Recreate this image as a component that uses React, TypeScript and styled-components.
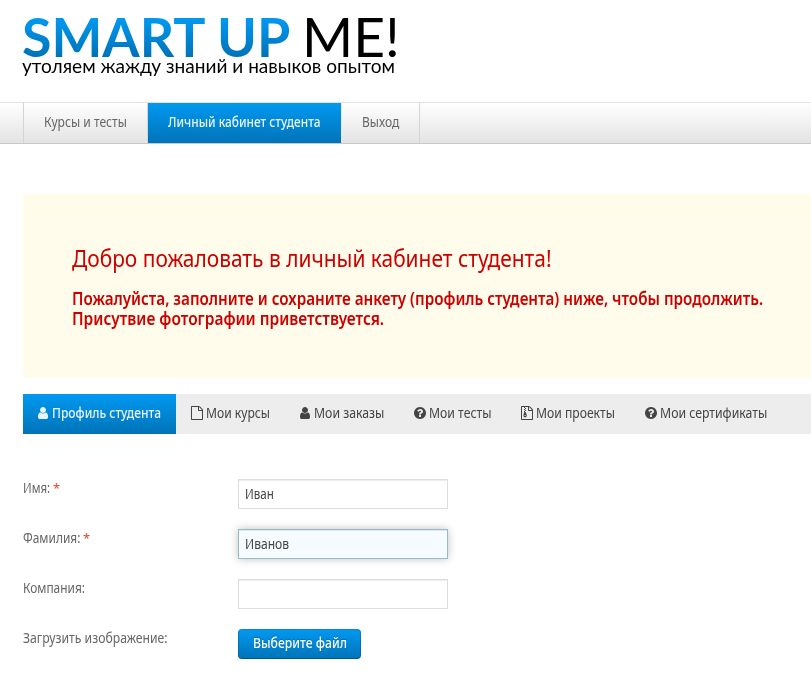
import React, { useLayoutEffect, useRef, useState } from "react";
import styled, { createGlobalStyle, css } from "styled-components";

const Global = createGlobalStyle`
  *, *::before, *::after { box-sizing: border-box; }
  html, body { margin: 0; background: #fff; }
  body {
    font-family: "Noto Sans", "Open Sans", sans-serif;
    font-size: 14px;
    line-height: 20px;
    color: #666;
    overflow: hidden;
  }
`;

const blue = "linear-gradient(#0199f1, #0073b8)";

const FitBox = styled.span<{ $w: number }>`
  display: inline-block;
  width: ${(p) => p.$w}px;
  white-space: nowrap;
  flex: none;
`;
const FitText = styled.span`
  display: inline-block;
  transform-origin: 0 50%;
`;

/* Condenses a run of text to the given width. */
function Fit({ width, children }: { width: number; children: React.ReactNode }) {
  const ref = useRef<HTMLSpanElement>(null);
  const [scale, setScale] = useState(1);
  useLayoutEffect(() => {
    if (ref.current) setScale(width / ref.current.offsetWidth);
  }, [width]);
  return (
    <FitBox $w={width}>
      <FitText ref={ref} style={{ transform: `scaleX(${scale})` }}>{children}</FitText>
    </FitBox>
  );
}

const Page = styled.div`
  width: 811px;
  height: 687px;
  overflow: hidden;
`;

const Header = styled.header`
  height: 102px;
  padding: 10px 0 0 22px;
`;
const Brand = styled.div`
  display: flex;
  gap: 12px;
  height: 46px;
  font-family: Lato, sans-serif;
  font-size: 54px;
  line-height: 54px;
`;
const BrandBlue = styled.span`
  font-weight: 700;
  height: 54px;
  span span {
    color: transparent;
    background: linear-gradient(#0199f1 15%, #0073b8 85%);
    background-clip: text;
    -webkit-background-clip: text;
  }
`;
const BrandBlack = styled.span`
  color: #000;
  font-weight: 400;
`;
const Tagline = styled.div`
  color: #000;
  font-family: Lato, "Open Sans", sans-serif;
  font-size: 19px;
  line-height: 20px;
`;

const Nav = styled.nav`
  display: flex;
  height: 42px;
  padding-left: 23px;
  border-top: 1px solid #e2e2e2;
  border-bottom: 1px solid #c8c8c8;
  background: linear-gradient(#fff, #e3e3e3);
`;
const NavItem = styled.a<{ $active?: boolean; $first?: boolean }>`
  padding: 9px 20px 0;
  border-right: 1px solid #d4d4d4;
  ${(p) => p.$first && css`border-left: 1px solid #d4d4d4;`}
  ${(p) =>
    p.$active &&
    css`
      color: #e8f4fc;
      font-weight: 500;
      background: ${blue};
      border-right-color: #e8e8e8;
    `}
`;

const Main = styled.main`
  padding: 50px 0 0 23px;
`;
const Notice = styled.section`
  height: 184px;
  padding: 48px 49px;
  background: #fffceb;
  color: #cc0000;
`;
const Title = styled.h1`
  margin: 0 0 15px;
  font-size: 24px;
  line-height: 32px;
  font-weight: 400;
`;
const Message = styled.p`
  margin: 0;
  display: flex;
  flex-direction: column;
  font-size: 17px;
  line-height: 20px;
  font-weight: 600;
`;

const Tabs = styled.div`
  display: flex;
  height: 40px;
  margin-top: 16px;
  background: #ededed;
`;
const Tab = styled.a<{ $active?: boolean; $pad: number }>`
  display: flex;
  padding: 9px 15px 0 ${(p) => p.$pad}px;
  color: #444;
  svg { margin: 3px 2px 0 -1px; flex: none; }
  ${(p) =>
    p.$active &&
    css`
      color: #e8f4fc;
      font-weight: 500;
      background: ${blue};
    `}
`;

const Form = styled.form`
  display: grid;
  row-gap: 20px;
  margin-top: 45px;
`;
const Field = styled.div`
  display: grid;
  grid-template-columns: 215px 210px;
  height: 30px;
`;
const Label = styled.label`
  display: flex;
  gap: 3px;
  height: 20px;
  line-height: 18px;
`;
const Star = styled.span`
  color: #d85030;
  font-size: 13px;
`;
const Control = styled.div<{ $focus?: boolean }>`
  height: 30px;
  padding: 4px 6px;
  color: #444;
  border: 1px solid #ddd;
  background: #fff;
  box-shadow: inset 0 1px 0 #eee;
  ${(p) =>
    p.$focus &&
    css`
      border-color: #99baca;
      background: #f5fbfe;
      box-shadow: 0 0 8px rgba(0, 0, 0, 0.25), inset 0 1px 0 #dfe9ee;
    `}
`;
const FileButton = styled.button`
  width: 123px;
  height: 30px;
  padding: 0 15px 2px 14px;
  color: #fff;
  font: 500 14px/20px "Noto Sans", "Open Sans", sans-serif;
  text-align: left;
  text-shadow: 0 -1px 0 rgba(0, 0, 0, 0.2);
  background: linear-gradient(#0199f1, #0073b8);
  border: 1px solid rgba(0, 0, 0, 0.15);
  border-top-color: rgba(0, 0, 0, 0.1);
  border-bottom-color: rgba(0, 0, 0, 0.25);
  border-radius: 4px;
  background-origin: border-box;
`;

type IconName = "user" | "file" | "question" | "zip";
const file =
  "M1596 380q28 28 48 76t20 88v1152q0 40-28 68t-68 28h-1344q-40 0-68-28t-28-68v-1600q0-40 28-68t68-28h896q40 0 88 20t76 48zm-444-244v376h376q-10-29-22-41l-313-313q-12-12-41-22zm384 1528v-1024h-416q-40 0-68-28t-28-68v-416h-768v1536h1280z";
const paths: Record<IconName, string> = {
  user: "M1536 1399q0 109-62.5 187t-150.5 78h-854q-88 0-150.5-78t-62.5-187q0-85 8.5-160.5t31.5-152 58.5-131 94-89 134.5-34.5q131 128 313 128t313-128q76 0 134.5 34.5t94 89 58.5 131 31.5 152 8.5 160.5zm-256-887q0 159-112.5 271.5t-271.5 112.5-271.5-112.5-112.5-271.5 112.5-271.5 271.5-112.5 271.5 112.5 112.5 271.5z",
  file,
  question:
    "M1024 1376v-192q0-14-9-23t-23-9h-192q-14 0-23 9t-9 23v192q0 14 9 23t23 9h192q14 0 23-9t9-23zm256-672q0-88-55.5-163t-138.5-116-170-41q-243 0-371 213-15 24 8 42l132 100q7 6 19 6 16 0 25-12 53-68 86-92 34-24 86-24 48 0 85.5 26t37.5 59q0 38-20 61t-68 45q-63 28-115.5 86.5t-52.5 125.5v36q0 14 9 23t23 9h192q14 0 23-9t9-23q0-19 21.5-49.5t54.5-49.5q32-18 49-28.5t46-35 44.5-48 28-60.5 12.5-81zm384 192q0 209-103 385.5t-279.5 279.5-385.5 103-385.5-103-279.5-279.5-103-385.5 103-385.5 279.5-279.5 385.5-103 385.5 103 279.5 279.5 103 385.5z",
  zip:
    file +
    "M512 128h128v128h-128zM640 256h128v128h-128zM512 384h128v128h-128zM640 512h128v128h-128zM512 640h128v128h-128zM560 768h180l130 420q20 270-220 270t-220-270zM560 1190v100h180v-100z",
};

const Icon = ({ name }: { name: IconName }) => (
  <svg width="14" height="14" viewBox="0 0 1792 1792" fill="currentColor" fillRule={name === "zip" ? "evenodd" : "nonzero"}>
    <path d={paths[name]} />
  </svg>
);

const tabs: { icon: IconName; text: string; w: number; pad: number }[] = [
  { icon: "user", text: "Профиль студента", w: 109, pad: 14 },
  { icon: "file", text: "Мои курсы", w: 64, pad: 15 },
  { icon: "user", text: "Мои заказы", w: 70, pad: 14 },
  { icon: "question", text: "Мои тесты", w: 62, pad: 15 },
  { icon: "zip", text: "Мои проекты", w: 79, pad: 15 },
  { icon: "question", text: "Мои сертификаты", w: 107, pad: 15 },
];

export default function App() {
  return (
    <Page>
      <Global />
      <Header>
        <Brand>
          <BrandBlue><Fit width={268}>SMART UP</Fit></BrandBlue>
          <BrandBlack><Fit width={98}>ME!</Fit></BrandBlack>
        </Brand>
        <Tagline><Fit width={373}>утоляем жажду знаний и навыков опытом</Fit></Tagline>
      </Header>
      <Nav>
        <NavItem $first><Fit width={83}>Курсы и тесты</Fit></NavItem>
        <NavItem $active><Fit width={153}>Личный кабинет студента</Fit></NavItem>
        <NavItem><Fit width={37}>Выход</Fit></NavItem>
      </Nav>
      <Main>
        <Notice>
          <Title><Fit width={480}>Добро пожаловать в личный кабинет студента!</Fit></Title>
          <Message>
            <Fit width={691}>Пожалуйста, заполните и сохраните анкету (профиль студента) ниже, чтобы продолжить.</Fit>
            <Fit width={312}>Присутвие фотографии приветствуется.</Fit>
          </Message>
        </Notice>
        <Tabs>
          {tabs.map((t, i) => (
            <Tab key={t.text} $active={i === 0} $pad={t.pad}>
              <Icon name={t.icon} />
              <Fit width={t.w}>{t.text}</Fit>
            </Tab>
          ))}
        </Tabs>
        <Form>
          <Field>
            <Label><Fit width={27}>Имя:</Fit><Star>*</Star></Label>
            <Control><Fit width={29}>Иван</Fit></Control>
          </Field>
          <Field>
            <Label><Fit width={57}>Фамилия:</Fit><Star>*</Star></Label>
            <Control $focus><Fit width={44}>Иванов</Fit></Control>
          </Field>
          <Field>
            <Label><Fit width={62}>Компания:</Fit></Label>
            <Control />
          </Field>
          <Field>
            <Label><Fit width={145}>Загрузить изображение:</Fit></Label>
            <FileButton type="button"><Fit width={94}>Выберите файл</Fit></FileButton>
          </Field>
        </Form>
      </Main>
    </Page>
  );
}
